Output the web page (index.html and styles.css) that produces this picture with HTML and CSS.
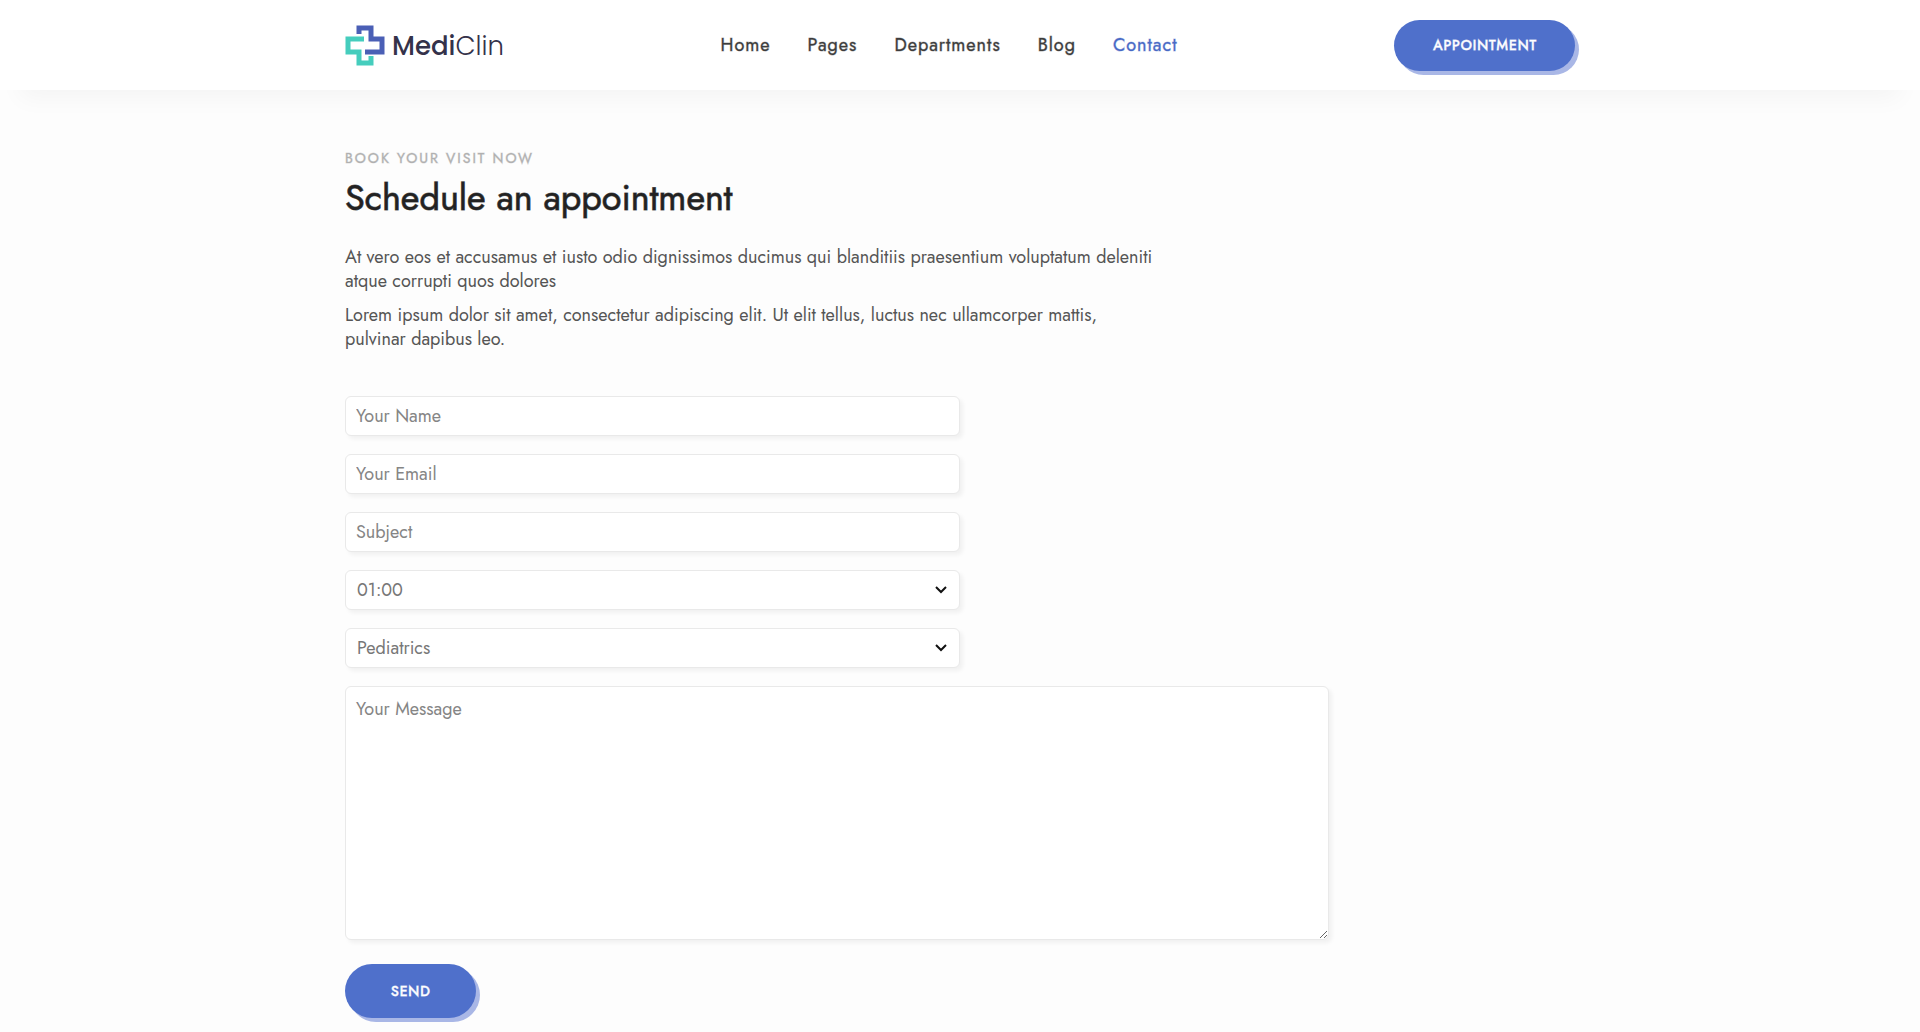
FILE: index.html
```html
<!DOCTYPE html>
<html lang="en">
<head>
    <meta charset="UTF-8">
    <meta name="viewport" content="width=device-width, initial-scale=1.0">
    <title>MediClin - Schedule an appointment</title>
    <link rel="stylesheet" href="styles.css">
</head>
<body>
    <header class="header">
        <div class="container header-inner">
            <a href="#" class="logo">
                <svg width="40" height="41" viewBox="0 0 40 41" fill="none" stroke-width="5">
                    <path stroke="#4a5fb5" d="M14 9V3H26V14H37V27H20"/>
                    <path stroke="#45cdbd" d="M19 14H3V27H14V38H26V31"/>
                </svg>
                <span class="logo-text"><b>Medi</b>Clin</span>
            </a>
            <nav class="nav">
                <a href="#">Home</a>
                <a href="#">Pages</a>
                <a href="#">Departments</a>
                <a href="#">Blog</a>
                <a href="#" class="active">Contact</a>
            </nav>
            <button type="button" class="btn btn-header">APPOINTMENT</button>
        </div>
    </header>

    <main class="container main">
        <div class="intro">
            <p class="eyebrow">BOOK YOUR VISIT NOW</p>
            <h1>Schedule an appointment</h1>
            <p>At vero eos et accusamus et iusto odio dignissimos ducimus qui blanditiis praesentium voluptatum deleniti atque corrupti quos dolores</p>
            <p>Lorem ipsum dolor sit amet, consectetur adipiscing elit. Ut elit tellus, luctus nec ullamcorper mattis, pulvinar dapibus leo.</p>
        </div>

        <form id="appointmentForm" class="form">
            <input type="text" class="field" name="name" placeholder="Your Name" aria-label="Your Name">
            <input type="email" class="field" name="email" placeholder="Your Email" aria-label="Your Email">
            <input type="text" class="field" name="subject" placeholder="Subject" aria-label="Subject">
            <div class="select">
                <select class="field" name="time" aria-label="Time">
                    <option>01:00</option>
                </select>
                <svg class="arrow" width="14" height="10" viewBox="0 0 14 10"><path d="M2 2L7 7L12 2" fill="none" stroke="#111" stroke-width="2"/></svg>
            </div>
            <div class="select">
                <select class="field" name="department" aria-label="Department">
                    <option>Pediatrics</option>
                </select>
                <svg class="arrow" width="14" height="10" viewBox="0 0 14 10"><path d="M2 2L7 7L12 2" fill="none" stroke="#111" stroke-width="2"/></svg>
            </div>
            <textarea class="field message" name="message" placeholder="Your Message" aria-label="Your Message"></textarea>
            <button type="submit" class="btn btn-send">SEND</button>
        </form>
    </main>
</body>
</html>
```
FILE: styles.css
```css
* {
    box-sizing: border-box;
}
body {
    margin: 0;
    font-family: Jost, Lato, sans-serif;
    font-size: 18px;
    font-weight: 400;
    line-height: 24px;
    color: #555;
    background-color: #fdfdfd;
}
a {
    color: inherit;
    text-decoration: none;
}
.container {
    max-width: 1270px;
    margin: 0 auto;
    padding: 0 20px;
}

/* header */
.header {
    padding: 20px 0 19px;
    background-color: #fff;
    box-shadow: 0 28px 24px -20px rgba(0, 0, 0, 0.04);
}
.header-inner {
    display: flex;
    justify-content: space-between;
    align-items: center;
}
.logo {
    display: flex;
    align-items: center;
    gap: 7px;
}
.logo-text {
    font-family: Poppins, Lato, sans-serif;
    font-size: 26px;
    line-height: 32px;
    font-weight: 300;
    color: #34324a;
}
.logo-text b {
    font-weight: 500;
}
.nav {
    display: flex;
    gap: 37px;
    letter-spacing: 1px;
    -webkit-text-stroke: 1px rgba(68, 68, 68, 0.4);
    line-height: 22px;
    padding-bottom: 2px;
    color: #3a3a3a;
}
.nav .active {
    color: #4667c4;
    -webkit-text-stroke-color: rgba(79, 112, 201, 0.4);
}
.btn {
    border: none;
    border-radius: 30px;
    background-color: #4f70cb;
    box-shadow: 4px 4px 0 #a9b7e6;
    color: #fff;
    font-family: inherit;
    font-size: 14px;
    font-weight: 400;
    -webkit-text-stroke: 1px rgba(255, 255, 255, 0.7);
    letter-spacing: 1px;
    cursor: pointer;
}
.btn-header {
    height: 51px;
    padding: 0 38px 2px 39px;
}
.btn-send {
    height: 54px;
    padding: 0 45px 0 46px;
    margin-top: 6px;
}

/* content */
.main {
    padding-top: 56px;
    padding-bottom: 14px;
}
.intro {
    max-width: 810px;
}
.intro p {
    margin: 0 0 10px;
}
.intro .eyebrow {
    margin: 0;
    font-size: 14px;
    letter-spacing: 2px;
    -webkit-text-stroke: 1px rgba(176, 176, 176, 0.4);
    color: #b0b0b0;
}
h1 {
    margin: 6px 0 27px;
    font-size: 36px;
    line-height: 42px;
    font-weight: 400;
    -webkit-text-stroke: 1px rgba(34, 34, 34, 0.7);
    color: #222;
}

/* form */
.form {
    display: flex;
    flex-direction: column;
    align-items: flex-start;
    gap: 18px;
    margin-top: 45px;
}
.field {
    width: 50%;
    height: 40px;
    padding: 0 10px;
    border: 1px solid #e9e9e9;
    border-radius: 6px;
    background-color: #fff;
    box-shadow: 3px 3px 4px rgba(0, 0, 0, 0.05);
    font-family: inherit;
    font-size: 18px;
    font-weight: 400;
    color: #777;
}
.field::placeholder {
    color: #858585;
}
.select {
    position: relative;
    width: 50%;
}
.select .field {
    display: block;
    width: 100%;
    padding: 0 11px;
    appearance: none;
}
.arrow {
    position: absolute;
    top: 15px;
    right: 12px;
    pointer-events: none;
}
.message {
    width: 80%;
    height: 254px;
    padding: 10px;
    line-height: 24px;
    resize: vertical;
}
```
